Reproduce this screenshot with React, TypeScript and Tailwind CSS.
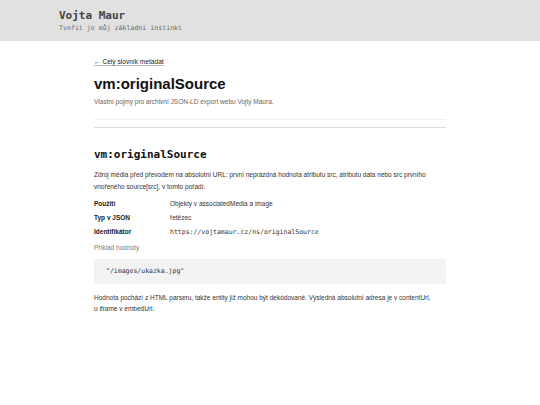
export default function App() {
  const sans = { fontFamily: '"Liberation Sans", Arial, sans-serif' };
  return (
    <div className="min-h-[405px] w-[540px] bg-white" style={sans}>
      <header className="h-[41px] bg-[#e1e1e1] pl-[59px] pt-[9px]">
        <div className="font-['DejaVu_Sans_Mono',monospace] text-[11px] font-bold leading-[14px] text-[#444]">Vojta Maur</div>
        <div className="font-['DejaVu_Sans_Mono',monospace] text-[6.6px] leading-[10px] text-[#666]">Tvořit je můj základní instinkt</div>
      </header>
      <main className="mx-[94px] w-[352px] pt-[6px]">
        <div className="pb-[12px] border-b border-[#f0f0f0]">
          <a className="text-[6.6px] leading-[10px] text-[#222] underline decoration-[#bbb]">← Celý slovník metadat</a>
          <h1 className="mt-[4px] text-[15px] font-bold leading-[18px] text-[#111]">vm:originalSource</h1>
          <p className="mt-[4px] text-[6.5px] leading-[10px] text-[#666]">Vlastní pojmy pro archivní JSON-LD export webu Vojty Maura.</p>
        </div>
        <hr className="mt-[7px] border-0 border-t border-[#dcdcdc]" />
        <h2 className="mt-[20px] font-['DejaVu_Sans_Mono',monospace] text-[11px] font-bold leading-[14px] text-[#111]">vm:originalSource</h2>
        <p className="mt-[7px] text-[6.5px] leading-[12px] text-[#333]">
          Zdroj média před převodem na absolutní URL: první neprázdná hodnota atributu src, atributu data nebo src prvního vnořeného source[src], v tomto pořadí.
        </p>
        <div className="mt-[5px] grid grid-cols-[76px_1fr] gap-y-[2px] text-[6.5px] leading-[12px] text-[#333]">
          <div className="font-bold text-[#222]">Použití</div>
          <div>Objekty v associatedMedia a image</div>
          <div className="font-bold text-[#222]">Typ v JSON</div>
          <div>řetězec</div>
          <div className="font-bold text-[#222]">Identifikátor</div>
          <div className="font-['DejaVu_Sans_Mono',monospace] text-[6.5px]">https://vojtamaur.cz/ns/originalSource</div>
        </div>
        <div className="mt-[4px] text-[6.5px] leading-[12px] text-[#777]">Příklad hodnoty</div>
        <div className="mt-[5px] flex h-[25px] items-center bg-[#f3f3f3] px-[12px] font-['DejaVu_Sans_Mono',monospace] text-[6.5px] text-[#333]">"/images/ukazka.jpg"</div>
        <p className="mt-[8px] pr-[14px] text-[6.5px] leading-[11px] text-[#333]">
          Hodnota pochází z HTML parseru, takže entity již mohou být dekódované. Výsledná absolutní adresa je v contentUrl, u iframe v embedUrl.
        </p>
      </main>
    </div>
  );
}
